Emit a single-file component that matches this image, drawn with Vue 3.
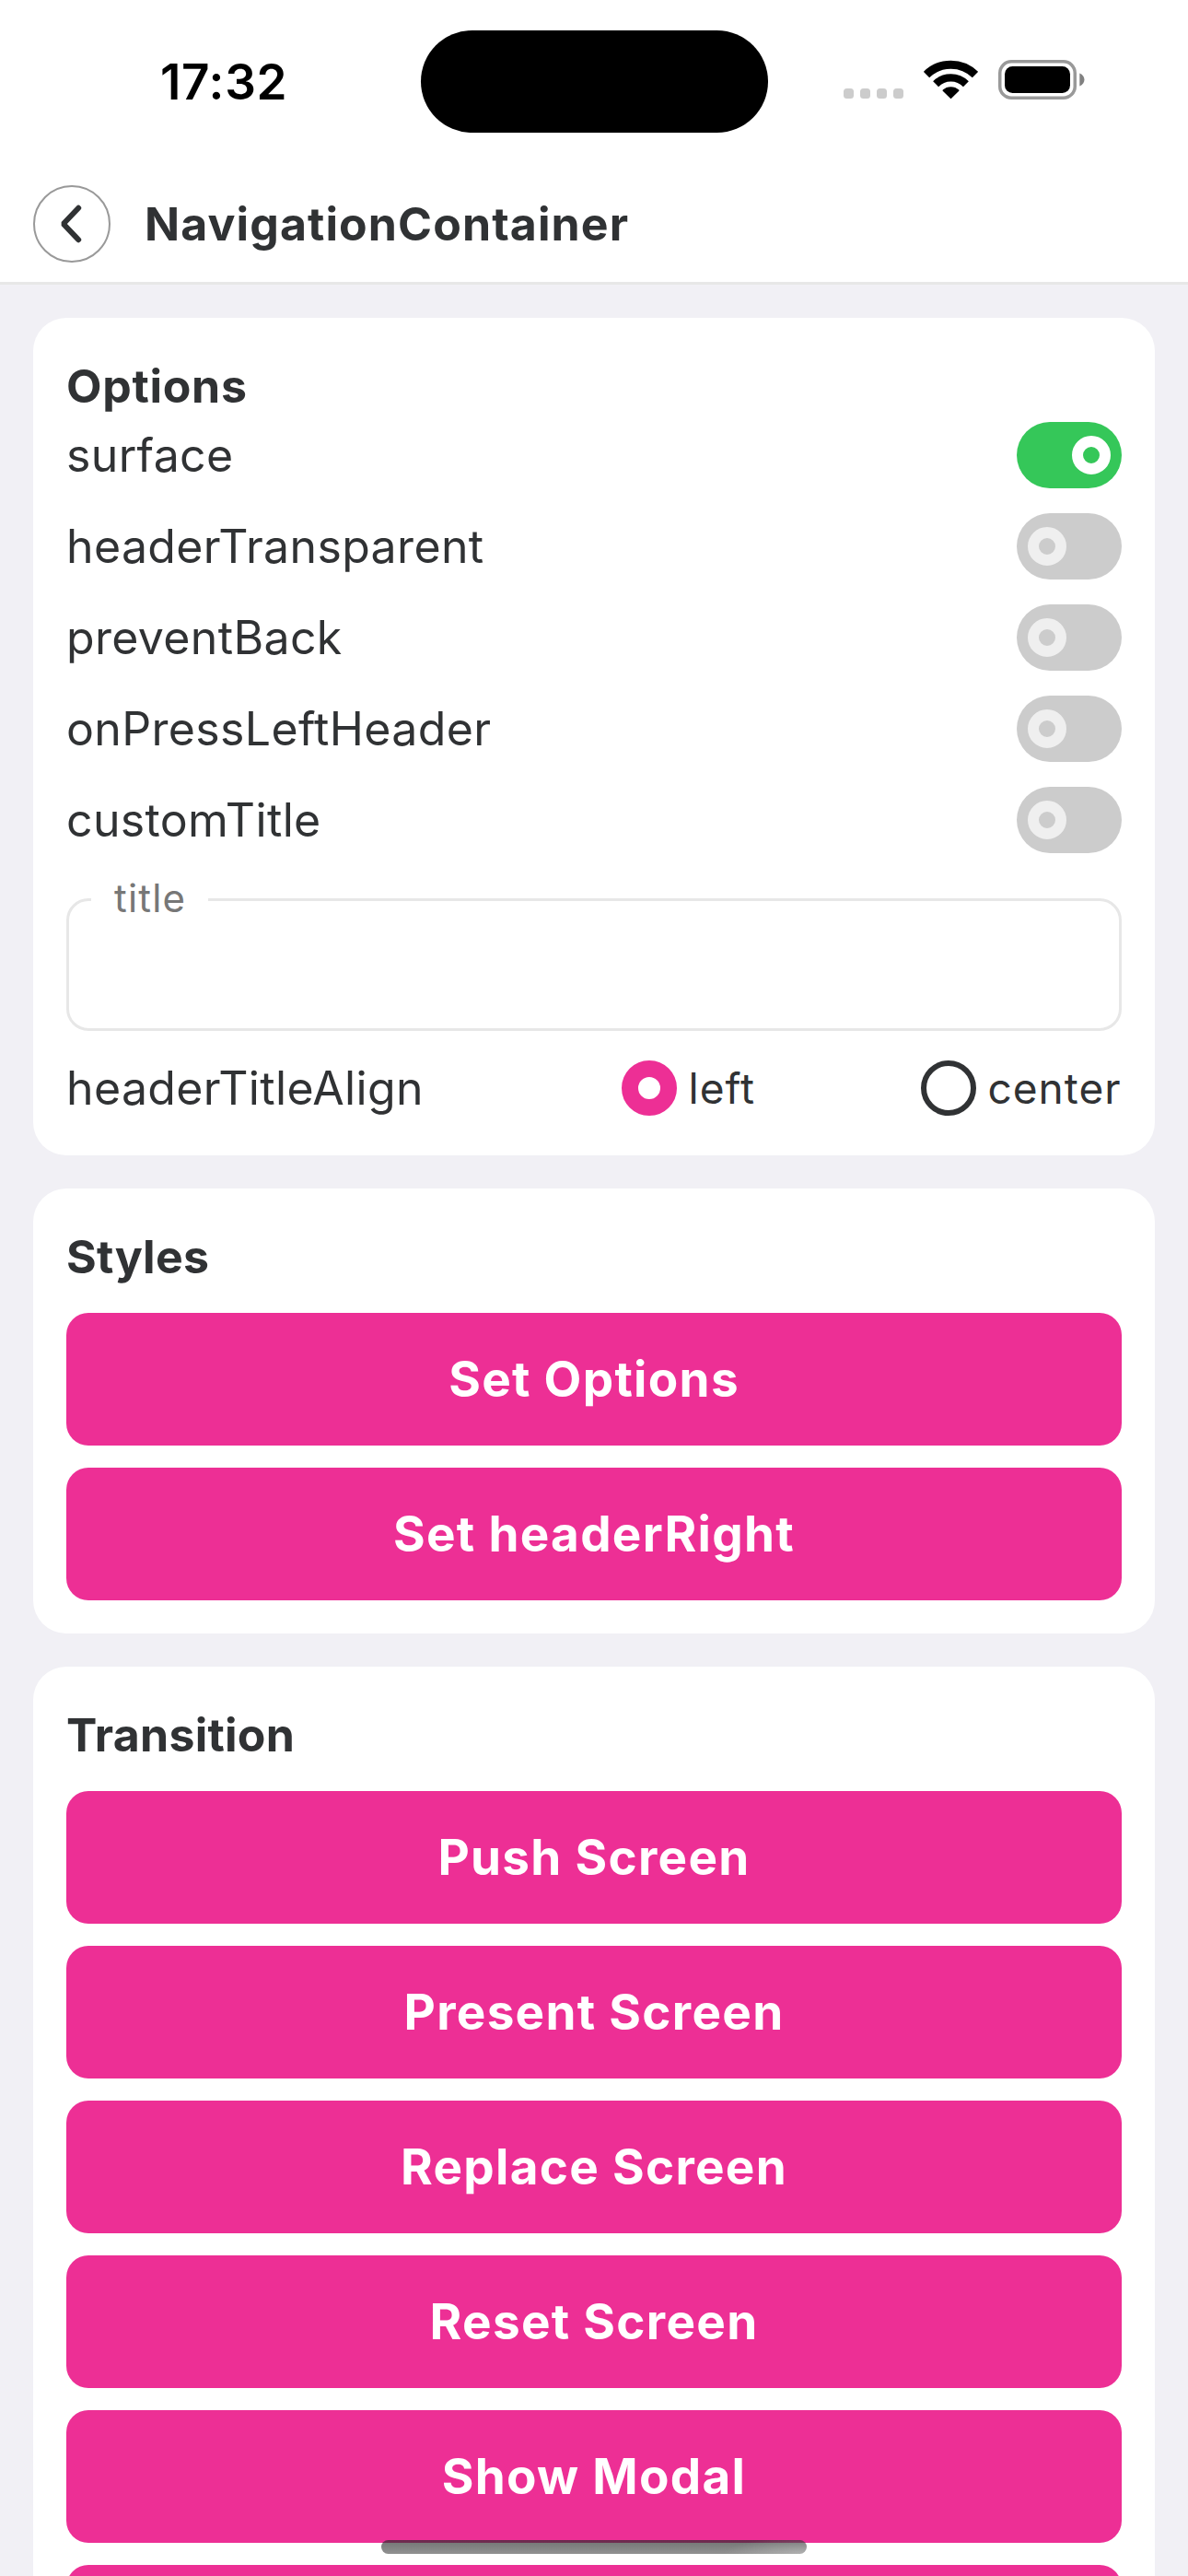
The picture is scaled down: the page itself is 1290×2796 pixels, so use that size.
<script setup>
import { ref } from 'vue'

const options = ref([
  { name: 'surface', on: true },
  { name: 'headerTransparent', on: false },
  { name: 'preventBack', on: false },
  { name: 'onPressLeftHeader', on: false },
  { name: 'customTitle', on: false },
])

const align = ref('left')
const aligns = ['left', 'center']

const groups = [
  { title: 'Styles', actions: ['Set Options', 'Set headerRight'] },
  {
    title: 'Transition',
    actions: ['Push Screen', 'Present Screen', 'Replace Screen', 'Reset Screen', 'Show Modal', ''],
  },
]
</script>

<template>
  <div class="screen">
    <header class="header">
      <div class="status">
        <div class="time">17:32</div>
        <div class="island"></div>
        <div class="indicators">
          <div class="dots"><i v-for="n in 4" :key="n"></i></div>
          <svg class="wifi" width="59" height="44" viewBox="0 0 59 44">
            <g fill="none" stroke="#000">
              <path d="M3 16.1A37.5 37.5 0 0 1 56 16.1" stroke-width="9" />
              <path d="M13.1 26.2A23.2 23.2 0 0 1 45.9 26.2" stroke-width="8.4" />
            </g>
            <path d="M29.5 41.3L21.3 33.2A12.2 12.2 0 0 1 37.7 33.2Z" stroke="#000" stroke-width="1.6" stroke-linejoin="round" />
          </svg>
          <svg class="battery" width="95" height="44" viewBox="0 0 95 44">
            <rect x="1.75" y="1.75" width="81.5" height="39.5" rx="12.5" fill="none" stroke="#999" stroke-width="3.5" />
            <rect x="7" y="7" width="71" height="29" rx="8.5" fill="#000" />
            <path d="M88.3 14.5C95.2 17.5 95.2 25.5 88.3 28.5Z" fill="#808080" />
          </svg>
        </div>
      </div>
      <div class="nav">
        <button class="back" aria-label="Back">
          <svg width="84" height="84" viewBox="0 0 84 84">
            <circle cx="42" cy="42" r="41" fill="none" stroke="#999" stroke-width="2" />
            <path d="M49.2 24.8L32.8 42L49.2 59.2" fill="none" stroke="#303234" stroke-width="6" stroke-linecap="round" stroke-linejoin="bevel" />
          </svg>
        </button>
        <h1>NavigationContainer</h1>
      </div>
    </header>

    <main class="content">
      <section class="card">
        <h2>Options</h2>
        <div class="toggles">
          <div v-for="o in options" :key="o.name" class="row">
            <span>{{ o.name }}</span>
            <button class="toggle" :class="{ on: o.on }" :aria-label="o.name" @click="o.on = !o.on"><i></i></button>
          </div>
        </div>
        <div class="field">
          <label>title</label>
        </div>
        <div class="row align">
          <span>headerTitleAlign</span>
          <div class="radios">
            <div v-for="a in aligns" :key="a" class="radio" :class="{ checked: align === a }" @click="align = a">
              <i></i><span>{{ a }}</span>
            </div>
          </div>
        </div>
      </section>

      <section v-for="g in groups" :key="g.title" class="card">
        <h2 class="spaced">{{ g.title }}</h2>
        <div class="actions">
          <button v-for="a in g.actions" :key="a" class="action">{{ a }}</button>
        </div>
      </section>
    </main>

    <div class="home"></div>
  </div>
</template>

<style>
html,
body {
  margin: 0;
  background: #f1f0f5;
}
</style>

<style scoped>
.screen {
  position: relative;
  width: 1290px;
  height: 2796px;
  overflow: hidden;
  background: #f1f0f5;
  color: #303234;
  font-family: Inter, "Liberation Sans", sans-serif;
  font-size: 50px;
}
button {
  border: 0;
  padding: 0;
  font-family: inherit;
}
h1,
h2 {
  margin: 0;
  font-size: 50px;
  font-weight: 700;
}
.header {
  height: 306px;
  background: #fff;
  border-bottom: 3px solid #e7e7e7;
}
.status {
  display: grid;
  grid-template-columns: 457px 377px 1fr;
  height: 177px;
  margin-bottom: 3px;
  align-items: center;
}
.time {
  padding-left: 174px;
  color: #000;
  font-size: 53px;
  font-weight: 600;
  letter-spacing: 0.7px;
}
.island {
  height: 111px;
  border-radius: 56px;
  background: #000;
}
.indicators {
  display: flex;
  align-items: flex-end;
  height: 44px;
  padding-left: 82px;
  margin-top: -3px;
}
.dots {
  display: flex;
  gap: 7px;
  margin-bottom: 2px;
}
.dots i {
  width: 11px;
  height: 11px;
  border-radius: 3.5px;
  background: #ccc;
}
.wifi {
  margin-left: 22px;
}
.battery {
  margin-left: 22px;
}
.nav {
  display: flex;
  align-items: center;
  gap: 37px;
  height: 126px;
  padding: 0 36px;
}
.nav h1 {
  letter-spacing: 1.1px;
}
.back {
  display: flex;
  background: none;
}
.content {
  display: flex;
  flex-direction: column;
  gap: 36px;
  padding: 36px;
}
.card {
  padding: 36px;
  border-radius: 36px;
  background: #fff;
}
h2 {
  height: 77px;
  line-height: 76px;
  letter-spacing: 0.7px;
}
h2.spaced {
  margin-bottom: 22px;
  letter-spacing: 0.25px;
}
.toggles {
  display: flex;
  flex-direction: column;
  gap: 27px;
}
.row {
  display: flex;
  align-items: center;
  justify-content: space-between;
  height: 72px;
  letter-spacing: 0.35px;
}
.toggle {
  display: flex;
  align-items: center;
  width: 114px;
  height: 72px;
  padding: 0 12px;
  border-radius: 36px;
  background: #ccc;
}
.toggle i {
  box-sizing: border-box;
  width: 42px;
  height: 42px;
  border: 12px solid #efefef;
  border-radius: 50%;
}
.toggle.on {
  justify-content: flex-end;
  background: #35c759;
}
.toggle.on i {
  border-color: #fff;
}
.field {
  position: relative;
  box-sizing: border-box;
  height: 144px;
  margin-top: 49px;
  border: 3px solid #e7e7e7;
  border-radius: 24px;
}
.field label {
  position: absolute;
  left: 24px;
  top: -30px;
  box-sizing: border-box;
  width: 127px;
  height: 56px;
  padding-left: 25px;
  background: #fff;
  color: #777;
  font-size: 42px;
  line-height: 53px;
  letter-spacing: 1.2px;
}
.align {
  height: 74px;
  margin-top: 25px;
}
.radios {
  display: grid;
  grid-template-columns: 325px 218px;
}
.radio {
  display: flex;
  align-items: center;
  gap: 12.5px;
  font-size: 46px;
  letter-spacing: 1px;
}
.radio i {
  box-sizing: border-box;
  width: 60px;
  height: 60px;
  border: 6px solid #303234;
  border-radius: 50%;
}
.radio.checked i {
  border: 18px solid #ed2f95;
}
.actions {
  display: flex;
  flex-direction: column;
  gap: 24px;
}
.action {
  height: 144px;
  border-radius: 24px;
  background: #ed2f95;
  color: #fff;
  font-size: 53px;
  font-weight: 700;
  letter-spacing: 1.3px;
}
.home {
  position: absolute;
  left: 414px;
  top: 2757px;
  width: 462px;
  height: 15px;
  border-radius: 7.5px;
  background:
    radial-gradient(ellipse 90px 18px at 100% 100%, rgba(255, 255, 255, 0.3), rgba(255, 255, 255, 0)),
    linear-gradient(to bottom, rgba(36, 40, 38, 0.65), rgba(62, 62, 62, 0.57));
}
</style>
